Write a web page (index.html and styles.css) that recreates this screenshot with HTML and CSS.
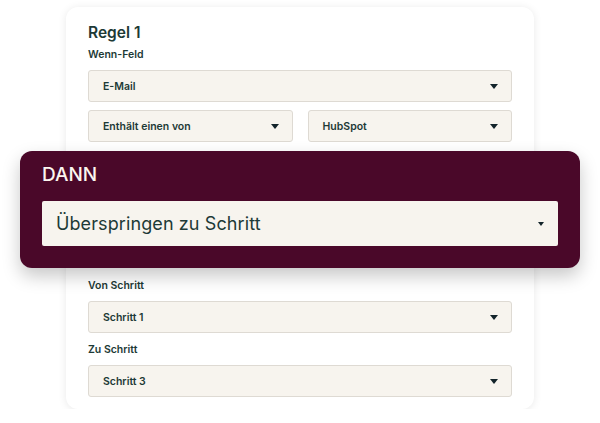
FILE: index.html
```html
<!DOCTYPE html>
<html lang="de">
<head>
    <meta charset="UTF-8">
    <title>Regel</title>
    <link rel="stylesheet" href="styles.css">
</head>
<body>
    <div class="rule-card">
        <div class="rule-title">Regel 1</div>
        <div class="field-label">Wenn-Feld</div>
        <div class="select">E-Mail<span class="caret"></span></div>
        <div class="select-row">
            <div class="select">Enthält einen von<span class="caret"></span></div>
            <div class="select">HubSpot<span class="caret"></span></div>
        </div>
        <div class="then-panel">
            <div class="then-title">DANN</div>
            <div class="select select-big">Überspringen zu Schritt<span class="caret"></span></div>
        </div>
        <div class="field-label">Von Schritt</div>
        <div class="select">Schritt 1<span class="caret"></span></div>
        <div class="field-label spaced">Zu Schritt</div>
        <div class="select">Schritt 3<span class="caret"></span></div>
    </div>
</body>
</html>
```

FILE: styles.css
```css
* { box-sizing: border-box; margin: 0; padding: 0; }
body {
    font-family: Inter, Lato, sans-serif;
    background: #fff;
    color: #1d3a36;
}
.rule-card {
    width: 468px;
    margin: 7px auto 0;
    padding: 16px 22px 12px;
    background: #fff;
    border-radius: 12px;
    box-shadow: 0 1px 8px rgba(0, 0, 0, 0.09);
}
.rule-title {
    font-size: 15.5px;
    font-weight: 600;
    line-height: 20px;
}
.field-label {
    font-size: 10.5px;
    font-weight: 600;
    line-height: 14px;
    margin: 5px 0 8px;
}
.field-label.spaced { margin-top: 10px; }
.select {
    position: relative;
    height: 32px;
    display: flex;
    align-items: center;
    padding: 0 14px;
    background: #f7f4ee;
    border: 1px solid #dedad3;
    border-radius: 3px;
    font-size: 10.5px;
    font-weight: 600;
}
.caret {
    margin-left: auto;
    margin-right: -1px;
    width: 0;
    height: 0;
    border-left: 4px solid transparent;
    border-right: 4px solid transparent;
    border-top: 5px solid #13242a;
}
.select-row {
    display: grid;
    grid-template-columns: 1fr 1fr;
    gap: 15px;
    margin-top: 8px;
}
.then-panel {
    margin: 9px -68px 0;
    padding: 11px 22px 22px;
    background: #4a0829;
    border-radius: 12px;
    box-shadow: 0 8px 18px rgba(0, 0, 0, 0.22);
    position: relative;
}
.then-title {
    color: #fbf6ef;
    font-size: 19px;
    font-weight: 500;
    line-height: 26px;
    margin-bottom: 13px;
}
.select-big {
    height: 45px;
    font-size: 18px;
    font-weight: 400;
    letter-spacing: 0.1px;
    border: none;
    border-radius: 2px;
}
.select-big .caret {
    border-left-width: 3.5px;
    border-right-width: 3.5px;
    border-top-width: 4px;
    margin-right: 0;
}
.then-panel + .field-label { margin-top: 11px; }
```
